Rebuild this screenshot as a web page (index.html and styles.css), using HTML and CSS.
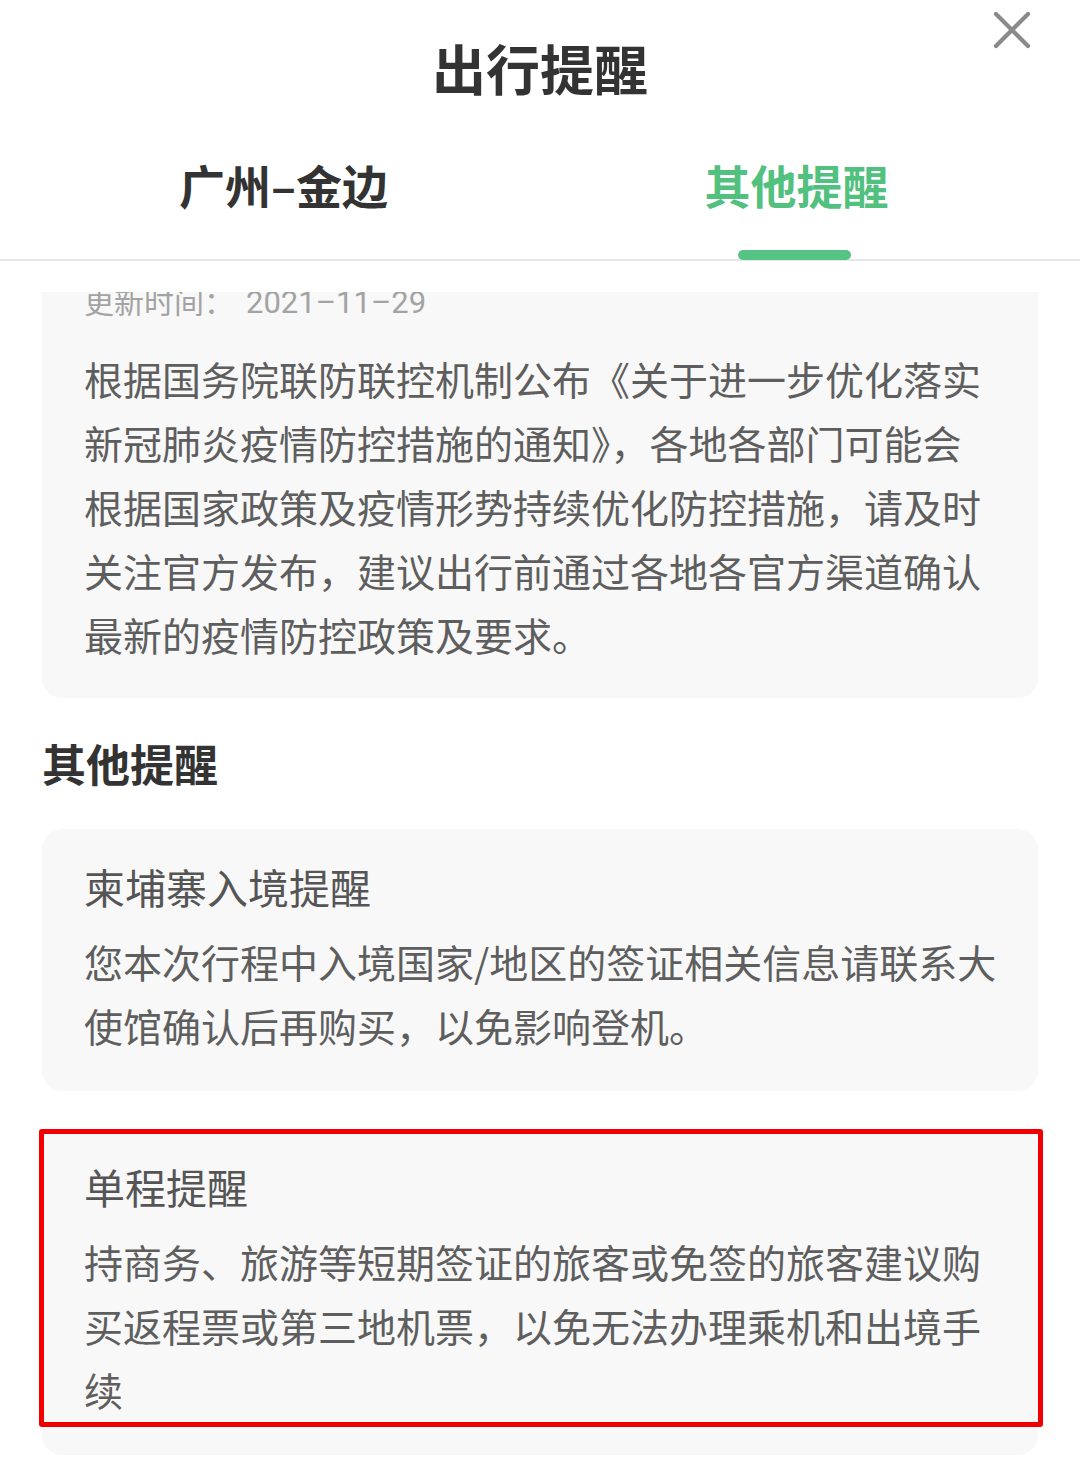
FILE: index.html
```html
<!DOCTYPE html>
<html lang="zh-CN">
<head>
<meta charset="utf-8">
<title>出行提醒</title>
<link rel="stylesheet" href="styles.css">
</head>
<body>
<div class="sheet">
  <header class="sheet-head">
    <h1 class="sheet-title">出行提醒</h1>
    <button class="close-btn" aria-label="关闭">
      <svg viewBox="0 0 38 38" width="38" height="38">
        <path d="M3 3 L35 35 M35 3 L3 35" stroke="#8a8a8a" stroke-width="4.2" stroke-linecap="round" fill="none"/>
      </svg>
    </button>
    <nav class="tabs">
      <div class="tab">广州–金边</div>
      <div class="tab tab-active">其他提醒</div>
    </nav>
  </header>

  <div class="viewport">
    <div class="list">
      <section class="card">
        <p class="card-meta">更新时间：<span class="card-date">2021–11–29</span></p>
        <p class="card-text">根据国务院联防联控机制公布《关于进一步优化落实新冠肺炎疫情防控措施的通知》，各地各部门可能会根据国家政策及疫情形势持续优化防控措施，请及时关注官方发布，建议出行前通过各地各官方渠道确认最新的疫情防控政策及要求。</p>
      </section>

      <h2 class="section-title">其他提醒</h2>

      <section class="card">
        <h3 class="card-title">柬埔寨入境提醒</h3>
        <p class="card-text">您本次行程中入境国家/地区的签证相关信息请联系大使馆确认后再购买，以免影响登机。</p>
      </section>

      <section class="card card-marked">
        <h3 class="card-title">单程提醒</h3>
        <p class="card-text">持商务、旅游等短期签证的旅客或免签的旅客建议购买返程票或第三地机票，以免无法办理乘机和出境手续</p>
        <div class="mark-box"></div>
      </section>
    </div>
  </div>
</div>
</body>
</html>
```

FILE: styles.css
```css
* {
  box-sizing: border-box;
}

html, body {
  margin: 0;
  padding: 0;
  background: #ffffff;
}

body {
  width: 1080px;
  height: 1463px;
  overflow: hidden;
  font-family: "Noto Sans CJK SC", "Noto Sans", sans-serif;
  color: #333333;
}

.sheet {
  display: flex;
  flex-direction: column;
  height: 1463px;
}

/* ---------- header ---------- */
.sheet-head {
  position: relative;
  flex: none;
  border-bottom: 2px solid #e6e6e6;
}

.sheet-title {
  margin: 0;
  padding-top: 34px;
  height: 112px;
  font-size: 54px;
  line-height: 68px;
  font-weight: 700;
  text-align: center;
  color: #333333;
}

.close-btn {
  position: absolute;
  top: 11px;
  right: 49px;
  width: 38px;
  height: 38px;
  padding: 0;
  border: 0;
  background: none;
  display: block;
}

.close-btn svg {
  display: block;
}

.tabs {
  display: flex;
  padding: 0 27px;
}

.tab {
  position: relative;
  flex: 1;
  height: 147px;
  padding-top: 42px;
  font-size: 46px;
  line-height: 60px;
  font-weight: 700;
  text-align: center;
  color: #333333;
}

.tab-active {
  color: #52c07f;
}

.tab-active::after {
  content: "";
  position: absolute;
  left: 50%;
  bottom: -1px;
  width: 113px;
  height: 10px;
  margin-left: -59px;
  border-radius: 5px;
  background: #55c383;
}

/* ---------- scrolling list ---------- */
.viewport {
  flex: 1;
  margin-top: 31px;
  overflow: hidden;
}

.list {
  /* list is scrolled down by 44px */
  margin-top: -44px;
  padding: 0 42px;
  display: flex;
  flex-direction: column;
}

.card {
  position: relative;
  background: #f8f8f8;
  border-radius: 20px;
  padding: 29px 38px 34px 42px;
}

.card + .card {
  margin-top: 38px;
}

.card-meta {
  margin: 0 0 21px;
  font-size: 30px;
  line-height: 44px;
  color: #a3a3a3;
}

.card-date {
  font-family: Roboto, "Noto Sans CJK SC", sans-serif;
  font-size: 31px;
  margin-left: 12px;
}

.card:first-child {
  padding-top: 30px;
  padding-bottom: 32px;
}

.card-title {
  margin: 0 0 15px;
  font-size: 41px;
  line-height: 56px;
  font-weight: 400;
  color: #555555;
}

.card-text {
  margin: 0;
  font-size: 39px;
  line-height: 64px;
  color: #5e5e5e;
}

.section-title {
  margin: 35px 0 36px;
  font-size: 44px;
  line-height: 60px;
  font-weight: 700;
  color: #333333;
}

/* red highlight frame around the one-way notice */
.mark-box {
  position: absolute;
  top: 0;
  left: -3px;
  right: -5px;
  height: 298px;
  border: 5px solid #f20000;
  border-radius: 3px;
  pointer-events: none;
}
```
